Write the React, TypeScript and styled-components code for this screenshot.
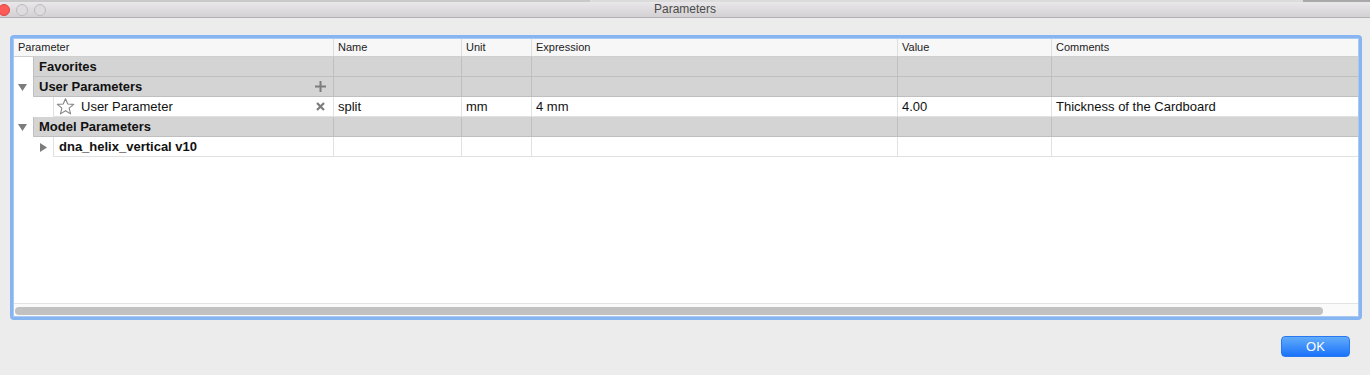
import styled, { createGlobalStyle } from "styled-components";

const COLORS = {
    window: "#ececec",
    focus: "#86b5f2",
    focusInner: "#a9c9f1",
    groupFill: "#d4d4d4",
    groupLine: "#bfbfbf",
    rowLine: "#e1e1e1",
    headerBg: "#f7f7f7",
    glyph: "#7c7c7c",
    text: "#111111"
};

const COLUMNS = "320px 128px 70px 366px 154px 306px";

const GlobalStyle = createGlobalStyle`
    html, body {
        margin: 0;
        padding: 0;
        background: ${COLORS.window};
    }
    body {
        font-family: "Liberation Sans", Arial, sans-serif;
        color: ${COLORS.text};
    }
`;

const Window = styled.div`
    width: 1370px;
    height: 375px;
    display: flex;
    flex-direction: column;
    background: ${COLORS.window};
    overflow: hidden;
`;

// strip of the window that sits behind the dialog
const BehindStrip = styled.div`
    height: 2px;
    background: linear-gradient(to right, #c9c9c9 0 590px, #dcdcdc 590px 1303px, #a9a9a9 1303px);
`;

const TitleBar = styled.div`
    height: 15px;
    display: grid;
    grid-template-columns: 1fr auto 1fr;
    align-items: center;
    background: linear-gradient(#e9e7e9, #d3d1d3);
    border-bottom: 1px solid #b3b1b3;
`;

const Lights = styled.div`
    display: flex;
    gap: 6px;
    margin: 1px 0 0 -2px;
`;

const Light = styled.span<{ $color: string; $edge: string }>`
    width: 12px;
    height: 12px;
    box-sizing: border-box;
    border-radius: 50%;
    background: ${(p) => p.$color};
    border: 1px solid ${(p) => p.$edge};
`;

const Title = styled.div`
    font-size: 12px;
    color: #4a4a4a;
    line-height: 15px;
`;

const Body = styled.div`
    flex: 1;
    display: flex;
    flex-direction: column;
    padding: 17px 8px 0 10px;
`;

const Frame = styled.div`
    height: 285px;
    box-sizing: border-box;
    border: 3px solid ${COLORS.focus};
    border-radius: 4px;
`;

const Inner = styled.div`
    height: 100%;
    box-sizing: border-box;
    border: 1px solid ${COLORS.focusInner};
    background: #fff;
    display: flex;
    flex-direction: column;
`;

const HeaderRow = styled.div`
    display: grid;
    grid-template-columns: ${COLUMNS};
    height: 17px;
    background: ${COLORS.headerBg};
    border-bottom: 1px solid #cfcfcf;
`;

const HeaderCell = styled.div`
    font-size: 11px;
    line-height: 17px;
    padding-left: 4px;
    color: #222;
    border-right: 1px solid #dedede;
    &:last-child {
        border-right: none;
    }
`;

const Row = styled.div`
    display: grid;
    grid-template-columns: ${COLUMNS};
    height: 20px;
`;

const FirstCell = styled.div`
    display: flex;
    min-width: 0;
`;

const Gutter = styled.div<{ $width: number }>`
    width: ${(p) => p.$width}px;
    flex-shrink: 0;
    display: flex;
    align-items: center;
    justify-content: flex-end;
    padding-right: 7px;
    box-sizing: border-box;
    background: #fff;
`;

const Label = styled.div<{ $group: boolean; $bold: boolean }>`
    flex: 1;
    display: flex;
    align-items: center;
    gap: 6px;
    padding-left: ${(p) => (p.$bold ? 5 : 2)}px;
    font-size: 13px;
    font-weight: ${(p) => (p.$bold ? 700 : 400)};
    background: ${(p) => (p.$group ? COLORS.groupFill : "#fff")};
    border-bottom: 1px solid ${(p) => (p.$group ? COLORS.groupLine : COLORS.rowLine)};
    border-right: 1px solid ${(p) => (p.$group ? COLORS.groupLine : COLORS.rowLine)};
    border-left: 1px solid ${(p) => (p.$group ? COLORS.groupLine : COLORS.rowLine)};
    margin-left: -1px;
`;

const LabelText = styled.span`
    flex: 1;
    white-space: nowrap;
`;

const Action = styled.span`
    width: 12px;
    display: flex;
    justify-content: center;
    margin-right: 7px;
`;

const Cell = styled.div<{ $group: boolean }>`
    font-size: 13px;
    line-height: 19px;
    padding-left: 4px;
    white-space: nowrap;
    background: ${(p) => (p.$group ? COLORS.groupFill : "#fff")};
    border-bottom: 1px solid ${(p) => (p.$group ? COLORS.groupLine : COLORS.rowLine)};
    border-right: 1px solid ${(p) => (p.$group ? COLORS.groupLine : COLORS.rowLine)};
    &:last-child {
        border-right: none;
    }
`;

const Empty = styled.div`
    flex: 1;
    background: #fff;
`;

const ScrollTrack = styled.div`
    height: 13px;
    box-sizing: border-box;
    border-top: 1px solid #e3e3e3;
    background: #fafafa;
    padding: 3px 1px 0 1px;
`;

const ScrollThumb = styled.div<{ $fraction: number }>`
    width: ${(p) => p.$fraction * 100}%;
    height: 8px;
    border-radius: 4px;
    background: #c1c1c1;
`;

const Footer = styled.div`
    display: flex;
    justify-content: flex-end;
    padding: 16px 12px 0 0;
`;

const OkButton = styled.button`
    width: 69px;
    height: 21px;
    border: 1px solid #2a78f0;
    border-radius: 4px;
    background: linear-gradient(#62acfb, #1a72fb);
    color: #fff;
    font-family: "Liberation Sans", Arial, sans-serif;
    font-size: 13px;
    padding: 0;
    line-height: 19px;
`;

const Disclosure = ({ open }: { open: boolean }) =>
    open ? (
        <svg width="9" height="7" viewBox="0 0 9 7">
            <polygon points="0,0 9,0 4.5,7" fill={COLORS.glyph} />
        </svg>
    ) : (
        <svg width="7" height="9" viewBox="0 0 7 9">
            <polygon points="0,0 7,4.5 0,9" fill={COLORS.glyph} />
        </svg>
    );

const StarIcon = () => (
    <svg width="19" height="17" viewBox="0 0 19 17">
        <polygon
            points="9.5,0.8 11.8,6 17.7,6.4 13.1,10.1 14.6,15.9 9.5,12.7 4.4,15.9 5.9,10.1 1.3,6.4 7.2,6"
            fill="none"
            stroke="#858585"
            strokeWidth="1.1"
            strokeLinejoin="round"
        />
    </svg>
);

const PlusIcon = () => (
    <svg width="11" height="11" viewBox="0 0 11 11">
        <path d="M5.5 0v11M0 5.5h11" stroke={COLORS.glyph} strokeWidth="2" />
    </svg>
);

const CrossIcon = () => (
    <svg width="9" height="9" viewBox="0 0 9 9">
        <path d="M1 1l7 7M8 1l-7 7" stroke={COLORS.glyph} strokeWidth="2.2" />
    </svg>
);

type RowData = {
    label: string;
    group: boolean;
    bold: boolean;
    indent: number;
    toggle?: "open" | "closed";
    star?: boolean;
    action?: "add" | "remove";
    cells: string[];
};

const HEADERS = ["Parameter", "Name", "Unit", "Expression", "Value", "Comments"];

const BLANK = ["", "", "", "", ""];

const ROWS: RowData[] = [
    { label: "Favorites", group: true, bold: true, indent: 20, cells: BLANK },
    {
        label: "User Parameters",
        group: true,
        bold: true,
        indent: 20,
        toggle: "open",
        action: "add",
        cells: BLANK
    },
    {
        label: "User Parameter",
        group: false,
        bold: false,
        indent: 40,
        star: true,
        action: "remove",
        cells: ["split", "mm", "4 mm", "4.00", "Thickness of the Cardboard"]
    },
    {
        label: "Model Parameters",
        group: true,
        bold: true,
        indent: 20,
        toggle: "open",
        cells: BLANK
    },
    {
        label: "dna_helix_vertical v10",
        group: false,
        bold: true,
        indent: 40,
        toggle: "closed",
        cells: BLANK
    }
];

const ParamRow = ({ row }: { row: RowData }) => (
    <Row>
        <FirstCell>
            <Gutter $width={row.indent}>
                {row.toggle && <Disclosure open={row.toggle === "open"} />}
            </Gutter>
            <Label $group={row.group} $bold={row.bold}>
                {row.star && <StarIcon />}
                <LabelText>{row.label}</LabelText>
                {row.action && <Action>{row.action === "add" ? <PlusIcon /> : <CrossIcon />}</Action>}
            </Label>
        </FirstCell>
        {row.cells.map((c, i) => (
            <Cell key={i} $group={row.group}>
                {c}
            </Cell>
        ))}
    </Row>
);

const App = () => (
    <>
        <GlobalStyle />
        <Window>
            <BehindStrip />
            <TitleBar>
                <Lights>
                    <Light $color="#fc5b57" $edge="#e0443f" />
                    <Light $color="#dedcde" $edge="#bdbbbd" />
                    <Light $color="#dedcde" $edge="#bdbbbd" />
                </Lights>
                <Title>Parameters</Title>
                <div />
            </TitleBar>
            <Body>
                <Frame>
                    <Inner>
                        <HeaderRow>
                            {HEADERS.map((h) => (
                                <HeaderCell key={h}>{h}</HeaderCell>
                            ))}
                        </HeaderRow>
                        {ROWS.map((r) => (
                            <ParamRow key={r.label} row={r} />
                        ))}
                        <Empty />
                        <ScrollTrack>
                            <ScrollThumb $fraction={1308 / 1342} />
                        </ScrollTrack>
                    </Inner>
                </Frame>
                <Footer>
                    <OkButton>OK</OkButton>
                </Footer>
            </Body>
        </Window>
    </>
);

export default App;
